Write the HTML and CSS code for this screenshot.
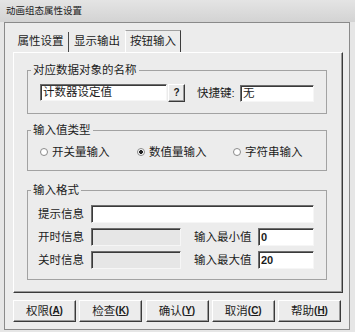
FILE: index.html
```html
<!DOCTYPE html>
<html>
<head>
	<meta charset="utf-8">
	<title>动画组态属性设置</title>
	<link rel="stylesheet" href="styles.css">
</head>
<body>
<div class="titlebar">动画组态属性设置</div>
<div class="frame">
	<div class="tabs">
		<span class="tab">属性设置</span>
		<span class="tab">显示输出</span>
		<span class="tab active">按钮输入</span>
	</div>
	<div class="panel">
		<fieldset class="group g1">
			<legend>对应数据对象的名称</legend>
			<div class="row">
				<span class="edit name">计数器设定值</span>
				<span class="qbtn">?</span>
				<span class="key">快捷键:</span>
				<span class="edit hot">无</span>
			</div>
		</fieldset>
		<fieldset class="group g2">
			<legend>输入值类型</legend>
			<div class="radios">
				<span class="radio"><i></i>开关量输入</span>
				<span class="radio on"><i></i>数值量输入</span>
				<span class="radio"><i></i>字符串输入</span>
			</div>
		</fieldset>
		<fieldset class="group g3">
			<legend>输入格式</legend>
			<div class="grid">
				<span class="lbl">提示信息</span>
				<span class="edit wide"></span>
				<span class="lbl">开时信息</span>
				<span class="edit off"></span>
				<span class="lbl lbl2">输入最小值</span>
				<span class="edit num">0</span>
				<span class="lbl">关时信息</span>
				<span class="edit off"></span>
				<span class="lbl lbl2">输入最大值</span>
				<span class="edit num">20</span>
			</div>
		</fieldset>
	</div>
	<div class="buttons">
		<span class="btn">权限<b>(<u>A</u>)</b></span>
		<span class="btn">检查<b>(<u>K</u>)</b></span>
		<span class="btn">确认<b>(<u>Y</u>)</b></span>
		<span class="btn">取消<b>(<u>C</u>)</b></span>
		<span class="btn">帮助<b>(<u>H</u>)</b></span>
	</div>
</div>
</body>
</html>
```

FILE: styles.css
```css
*{margin: 0; padding: 0; box-sizing: border-box;}
body{
	width: 355px; height: 332px; overflow: hidden;
	background: #e6e6e6; color: #1c1c1c;
	font: 11.5px/16px "Liberation Sans", "Noto Sans CJK SC", sans-serif;
}
.titlebar{
	height: 22px;
	padding: 3px 0 0 6px;
	font-size: 9.5px; line-height: 16px;
	background: linear-gradient(#e4e4e4, #d3d3d3);
	color: #222;
}
.frame{
	margin: 0 5px 0 4px;
	height: 308px;
	border: 1px solid #8a8a8a;
	background: #ececec;
	padding: 7px 6px 0 8px;
}

/* tabs */
.tabs{ display: flex; align-items: flex-end; height: 22px; }
.tab{
	width: 56px; height: 20px;
	text-align: center; line-height: 19px;
	border-right: 1px solid #4a4a4a;
}
.tab:nth-child(2){ border-right: none; }
.tab.active{
	height: 22px; line-height: 20px;
	border: 1px solid; border-bottom: none;
	border-color: #a0a0a0 #3c3c3c transparent #fff;
}
.panel{
	height: 241px;
	border: 1px solid; border-color: #fff #3a3a3a #3a3a3a #fff;
	box-shadow: inset -1px -1px #9a9a9a;
	padding: 9px 15px 0 13px;
}

/* group boxes */
.group{ border: 1px solid #a2a2a2; min-width: 0; }
.group legend{ margin-left: 3px; padding: 0 2px; line-height: 16px; }
.g1{ padding: 6px 0 11px; }
.g2{ margin-top: 8px; padding: 6px 0 10px; }
.g3{ margin-top: 11px; padding: 7px 0 10px; }

.edit{
	display: block;
	background: #fff;
	border: 1px solid; border-color: #6e6e6e #f6f6f6 #f6f6f6 #6e6e6e;
	box-shadow: inset 1px 1px #3a3a3a;
	padding: 0 1px 0 2px;
	line-height: 15px;
	white-space: nowrap;
}
.edit.off{ background: #e6e6e6; }
.edit.num{ font: bold 11px/16px "Liberation Sans", sans-serif; }

.row{ display: flex; align-items: flex-start; padding-left: 12px; height: 18px; }
.name{ width: 127px; height: 17px; }
.qbtn{
	width: 17px; height: 18px; margin-left: 1px;
	border: 1px solid; border-color: #fff #3a3a3a #3a3a3a #fff;
	box-shadow: inset -1px -1px #9a9a9a;
	font: bold 10px/16px "Liberation Sans", sans-serif;
	text-align: center;
}
.key{ width: 43px; margin-left: 12px; line-height: 18px; }
.hot{ width: 74px; height: 17px; margin-top: 1px; }

.radios{ display: grid; grid-template-columns: 97px 96px auto; padding-left: 12px; }
.radio{ display: flex; align-items: center; height: 16px; }
.radio i{
	width: 8px; height: 8px; margin-right: 4px;
	border-radius: 50%;
	border: 1px solid #8a8a8a;
	background: #fff;
}
.radio.on i{ background: radial-gradient(circle, #222 1.6px, #fff 2.2px); }

.grid{
	display: grid;
	grid-template-columns: 53px 90px 77px 56px;
	grid-auto-rows: 18px;
	row-gap: 5px;
	padding-left: 10px;
}
.lbl{ line-height: 18px; white-space: nowrap; }
.lbl2{ padding-left: 13px; }
.wide{ grid-column: 2 / span 3; }

/* bottom buttons */
.buttons{ display: flex; justify-content: space-between; margin: 7px 2px 0 0; }
.btn{
	width: 63px; height: 22px;
	display: flex; align-items: center; justify-content: center;
	border: 1px solid; border-color: #fff #3a3a3a #3a3a3a #fff;
	box-shadow: inset -1px -1px #9a9a9a;
}
.btn b{ font: bold 10px/16px "Liberation Sans", sans-serif; }
```
